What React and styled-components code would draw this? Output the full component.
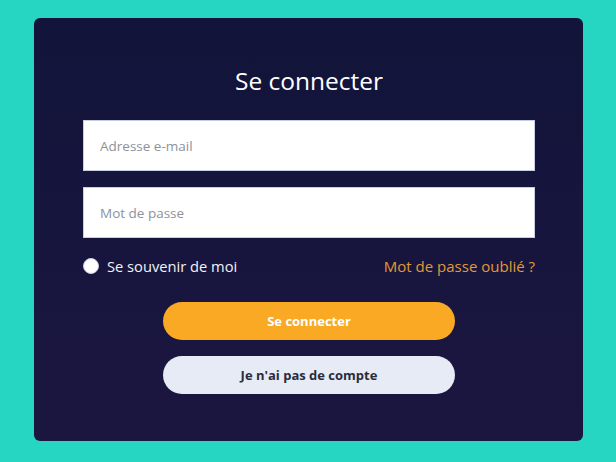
import React, { useState } from 'react';
import styled, { createGlobalStyle } from 'styled-components';

const GlobalStyle = createGlobalStyle`
  * { box-sizing: border-box; }
  body {
    margin: 0;
    background: #27d5c3;
    font-family: 'Open Sans', 'Noto Sans', sans-serif;
  }
`;

const Page = styled.div`
  width: 616px;
  height: 462px;
  padding: 18px 33px 21px 34px;
`;

const Card = styled.form`
  height: 100%;
  border-radius: 6px;
  background: linear-gradient(180deg, #12143a 0%, #1b1640 100%);
  padding: 46px 48px 0 49px;
  display: flex;
  flex-direction: column;
  align-items: center;
`;

const Title = styled.h1`
  margin: 0 0 22px;
  font-size: 24.5px;
  font-weight: 400;
  color: #ffffff;
  line-height: 34px;
`;

const Field = styled.input`
  width: 100%;
  height: 51px;
  border: 1px solid #c9cde2;
  background: #ffffff;
  padding: 0 16px;
  font-family: inherit;
  font-size: 13.5px;
  color: #333;
  margin-bottom: 16px;
  outline: none;

  &::placeholder {
    color: #8d929c;
  }
`;

const OptionsRow = styled.div`
  width: 100%;
  display: flex;
  align-items: center;
  justify-content: space-between;
  height: 24px;
`;

const Remember = styled.label`
  display: flex;
  align-items: center;
  gap: 8px;
  color: #f2f2f7;
  font-size: 14.7px;
  cursor: pointer;
`;

const Radio = styled.span`
  width: 16px;
  height: 16px;
  border-radius: 50%;
  background: ${(p) => (p.$checked ? '#f9a825' : '#ffffff')};
  border: 1px solid #c9cde2;
`;

const Forgot = styled.a`
  color: #e09a36;
  font-size: 15px;
  text-decoration: none;
`;

const Button = styled.button`
  width: 292px;
  height: 38px;
  border: none;
  border-radius: 19px;
  font-family: inherit;
  font-size: 13px;
  font-weight: 700;
  cursor: pointer;
  background: ${(p) => (p.$primary ? '#f9a923' : '#e6ebf5')};
  color: ${(p) => (p.$primary ? '#ffffff' : '#2b2b3a')};
  margin-top: ${(p) => (p.$primary ? '24px' : '16px')};
`;

const App = () => {
  const [remember, setRemember] = useState(false);

  return (
    <>
      <GlobalStyle />
      <Page>
        <Card onSubmit={(e) => e.preventDefault()}>
          <Title>Se connecter</Title>
          <Field type="email" placeholder="Adresse e-mail" />
          <Field type="password" placeholder="Mot de passe" />
          <OptionsRow>
            <Remember onClick={() => setRemember(!remember)}>
              <Radio $checked={remember} />
              Se souvenir de moi
            </Remember>
            <Forgot href="#">Mot de passe oublié ?</Forgot>
          </OptionsRow>
          <Button $primary type="submit">Se connecter</Button>
          <Button type="button">Je n'ai pas de compte</Button>
        </Card>
      </Page>
    </>
  );
};

export default App;
